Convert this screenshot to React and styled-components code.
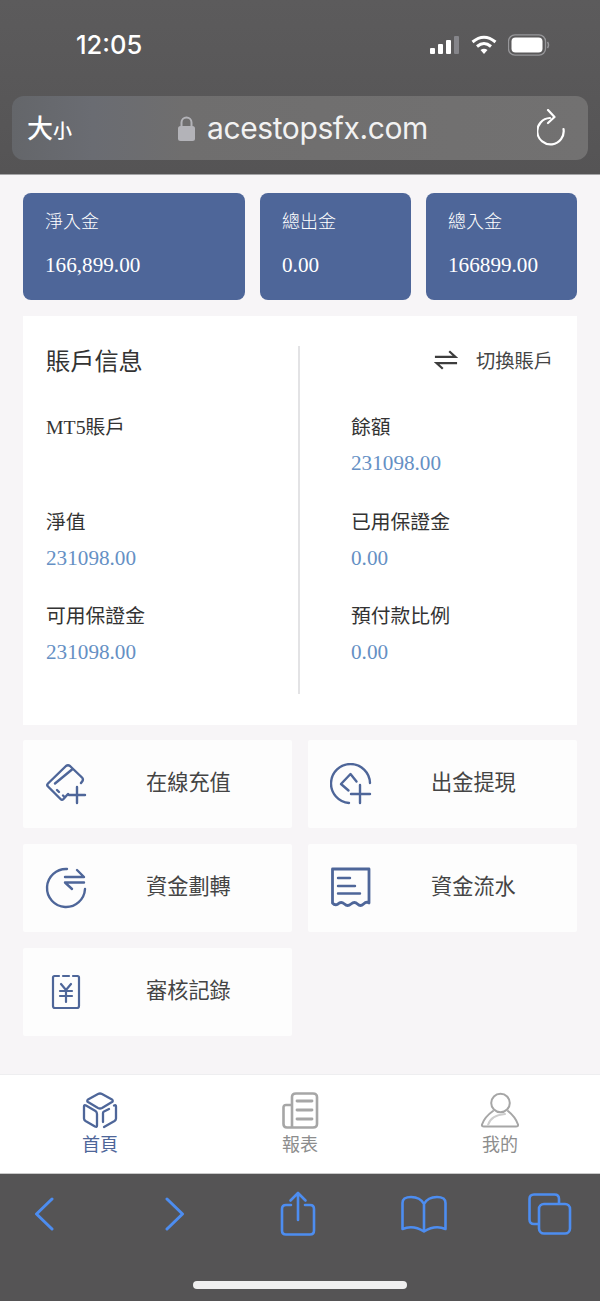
import React from 'react';
import styled, { createGlobalStyle } from 'styled-components';

const GlobalStyle = createGlobalStyle`
  html, body {
    margin: 0;
    padding: 0;
    background: #f7f5f7;
  }
  * {
    box-sizing: border-box;
  }
`;

const SANS = `"Noto Sans CJK TC", "Noto Sans", sans-serif`;
const SERIF = `"Liberation Serif", "Noto Sans CJK TC", serif`;
const BLUE = '#4e6699';
const VALUE = '#6590c4';
const SAFARI = '#4d8df0';
const GREY = '#a6a6a6';

const stats = [
  { label: '淨入金', value: '166,899.00', wide: true },
  { label: '總出金', value: '0.00' },
  { label: '總入金', value: '166899.00' },
];

const leftFields = [
  { label: 'MT5賬戶', value: '' },
  { label: '淨值', value: '231098.00' },
  { label: '可用保證金', value: '231098.00' },
];

const rightFields = [
  { label: '餘額', value: '231098.00' },
  { label: '已用保證金', value: '0.00' },
  { label: '預付款比例', value: '0.00' },
];

const CardPlus = () => (
  <svg width="42" height="42" viewBox="0 0 42 42" fill="none" stroke={BLUE} strokeWidth="2.4" strokeLinecap="round" strokeLinejoin="round">
    <path d="M23 31 L18.5 36 Q17 37.5 15.5 36 L3 23.5 Q1.5 22 3 20.5 L21 3 Q23 1.5 25 3 L37 14.5 Q38.5 16 37.5 18 L36 20" />
    <path d="M10 20.5 L27 6.5" />
    <path d="M12 27 L14 29 M18 32.5 L19 33.5" />
    <path d="M32 24 V40 M24 32 H40" />
  </svg>
);

const CirclePlus = () => (
  <svg width="42" height="42" viewBox="0 0 42 42" fill="none" stroke={BLUE} strokeWidth="2.4" strokeLinecap="round" strokeLinejoin="round">
    <path d="M40 20 A19.5 19.5 0 1 0 19 40" />
    <path d="M18.5 27.5 L11 21 L20.5 11 L26.5 18.5" />
    <path d="M30 22 V40 M21 31 H40" />
  </svg>
);

const CircleSwap = () => (
  <svg width="42" height="42" viewBox="0 0 42 42" fill="none" stroke={BLUE} strokeWidth="2.4" strokeLinecap="round" strokeLinejoin="round">
    <path d="M22 2 A19 19 0 1 0 40 22" />
    <path d="M20 10 H39 L32 3" />
    <path d="M39 15.5 H20 L27 22" />
  </svg>
);

const Receipt = () => (
  <svg width="42" height="42" viewBox="0 0 42 42" fill="none" stroke={BLUE} strokeWidth="2.8" strokeLinecap="round" strokeLinejoin="round">
    <path d="M2.5 2 H39 V36 Q36.5 34 33.5 37 Q30.5 40 27.5 37 Q24.5 34 21 37 Q17.5 40 14.5 37 Q11 34 8 37 Q5 39 2.5 36 Z" />
    <path d="M8 11 H20 M8 19 H25 M8 26.5 H30" strokeWidth="2.4" />
  </svg>
);

const YenNote = () => (
  <svg width="30" height="36" viewBox="0 0 30 36" fill="none" stroke={BLUE} strokeWidth="2.2" strokeLinecap="round" strokeLinejoin="round">
    <path d="M8 2 H3.5 Q2 2 2 3.5 V32 Q2 34 4 34 H26 Q28 34 28 32 V3.5 Q28 2 26.5 2 H22" />
    <path d="M12 2 H18" />
    <path d="M10 10 L15 16 L20 10 M9 17 H21 M9 22 H21 M15 16 V28" />
  </svg>
);

const actions = [
  { label: '在線充值', Icon: CardPlus },
  { label: '出金提現', Icon: CirclePlus },
  { label: '資金劃轉', Icon: CircleSwap },
  { label: '資金流水', Icon: Receipt },
  { label: '審核記錄', Icon: YenNote },
];

const tabs = [
  {
    label: '首頁',
    active: true,
    icon: (
      <svg width="40" height="40" viewBox="-2 0 40 40" fill="none" stroke={BLUE} strokeWidth="2.3" strokeLinecap="round" strokeLinejoin="round">
        <path d="M16 3 Q18 2 20 3 L30 8.5 Q31.5 10 30 11 L20 17 Q18 18 16 17 L6 11 Q4.5 10 6 8.5 Z" />
        <path d="M2 15.5 Q2 13.5 4 14.5 L13.5 20 Q15 21 15 23 V34.5 Q15 36.5 13 35.5 L3.5 30 Q2 29 2 27.5 Z" />
        <path d="M34 15.5 Q34 13.5 32 14.5 M34 15.5 V27.5 Q34 29 32.5 30 L22 36" />
        <path d="M21 31 V22 Q21 21 22 20.5 L27 18" />
      </svg>
    ),
  },
  {
    label: '報表',
    icon: (
      <svg width="40" height="40" viewBox="-2 0 40 40" fill="none" stroke={GREY} strokeWidth="2.6" strokeLinecap="round" strokeLinejoin="round">
        <path d="M10 14 H4 Q1.5 14 1.5 16.5 V33 Q1.5 36.5 5 36.5 H31 Q35 36.5 35 33 V6 Q35 2.5 31 2.5 H14 Q10 2.5 10 6 V36" />
        <path d="M15 10 H30 M15 19 H30 M15 28 H30" strokeWidth="2.8" />
      </svg>
    ),
  },
  {
    label: '我的',
    icon: (
      <svg width="40" height="40" viewBox="0 0 40 40" fill="none" stroke={GREY} strokeWidth="2" strokeLinecap="round" strokeLinejoin="round">
        <circle cx="20.5" cy="12" r="9.3" />
        <path d="M13 20 Q4.5 26 2 33.5 Q1.5 35.5 4 35.5 H36 Q38.5 35.5 38 33.5 Q35.5 26 28 20" />
        <path d="M8 34 Q11 24 25 23" stroke="#cdcdcd" />
      </svg>
    ),
  },
];

export default function App() {
  return (
    <>
      <GlobalStyle />
      <Page>
        <BrowserTop>
          <StatusBar>
            <Clock>12:05</Clock>
            <StatusIcons>
              <svg width="30" height="20" viewBox="0 0 30 20" fill="#fff">
                <rect x="0" y="13" width="5" height="6" rx="1" />
                <rect x="8" y="9" width="5" height="10" rx="1" />
                <rect x="16" y="5" width="5" height="14" rx="1" />
                <rect x="24" y="1" width="5" height="18" rx="1" fill="#85858a" />
              </svg>
              <svg width="26" height="20" viewBox="0 0 26 20" fill="none" stroke="#fff" strokeWidth="3">
                <path d="M1.5 7 Q13 -2.5 24.5 7" />
                <path d="M6 11.5 Q13 5.5 20 11.5" />
                <path d="M13 19 L9.5 15 Q13 12.5 16.5 15 Z" fill="#fff" stroke="none" />
              </svg>
              <svg width="42" height="22" viewBox="0 0 42 22" fill="none">
                <rect x="0.5" y="0.8" width="37" height="20.4" rx="6.5" stroke="#97979a" strokeWidth="1.3" />
                <rect x="3.5" y="3.5" width="31" height="15" rx="4" fill="#fff" />
                <path d="M39.5 8 Q41.5 11 39.5 14" stroke="#97979a" strokeWidth="1.5" />
              </svg>
            </StatusIcons>
          </StatusBar>
          <AddressBar>
            <TextSize>
              大<small>小</small>
            </TextSize>
            <AddressCenter>
              <svg width="17" height="25" viewBox="0 0 17 25">
                <path d="M3.5 11 V6.5 A5 5 0 0 1 13.5 6.5 V11" fill="none" stroke="#b3b3b8" strokeWidth="2" />
                <rect x="0" y="10" width="17" height="15" rx="2.5" fill="#b3b3b8" />
              </svg>
              <Domain>acestopsfx.com</Domain>
            </AddressCenter>
            <svg width="30" height="38" viewBox="0 0 30 38" fill="none" stroke="#fff" strokeWidth="2.2" strokeLinecap="round" strokeLinejoin="round">
              <path d="M13 9 A13.2 13.2 0 1 0 26.5 20" />
              <path d="M11 1 L17.5 8 L11 14" />
            </svg>
          </AddressBar>
        </BrowserTop>

        <Content>
          <StatRow>
            {stats.map((s) => (
              <StatCard key={s.label} $wide={s.wide}>
                <StatLabel>{s.label}</StatLabel>
                <StatValue>{s.value}</StatValue>
              </StatCard>
            ))}
          </StatRow>

          <AccountPanel>
            <AccountColumn>
              <PanelTitle>賬戶信息</PanelTitle>
              {leftFields.map((f) => (
                <Field key={f.label}>
                  <FieldLabel>{f.label}</FieldLabel>
                  <FieldValue>{f.value}</FieldValue>
                </Field>
              ))}
            </AccountColumn>
            <AccountColumn $right>
              <SwitchRow>
                <svg width="24" height="22" viewBox="0 0 26 22" fill="none" stroke="#3d3d3d" strokeWidth="2.4">
                  <path d="M1 7.5 H23 L16.5 1.5" />
                  <path d="M25 14.5 H3 L9.5 20.5" />
                </svg>
                <SwitchLabel>切換賬戶</SwitchLabel>
              </SwitchRow>
              {rightFields.map((f) => (
                <Field key={f.label}>
                  <FieldLabel>{f.label}</FieldLabel>
                  <FieldValue>{f.value}</FieldValue>
                </Field>
              ))}
            </AccountColumn>
          </AccountPanel>

          <ActionGrid>
            {actions.map(({ label, Icon }) => (
              <ActionButton key={label}>
                <ActionIcon>
                  <Icon />
                </ActionIcon>
                <ActionLabel>{label}</ActionLabel>
              </ActionButton>
            ))}
          </ActionGrid>
        </Content>

        <TabBar>
          {tabs.map((t) => (
            <Tab key={t.label} $active={t.active}>
              {t.icon}
              <span>{t.label}</span>
            </Tab>
          ))}
        </TabBar>

        <BrowserBottom>
          <ToolRow>
            <ToolSlot $left={0}>
              <svg width="20" height="34" viewBox="0 0 20 34" fill="none" stroke={SAFARI} strokeWidth="3" strokeLinecap="round" strokeLinejoin="round">
                <path d="M18 2 L2.5 17 L18 32" />
              </svg>
            </ToolSlot>
            <ToolSlot $left={111}>
              <svg width="20" height="34" viewBox="0 0 20 34" fill="none" stroke={SAFARI} strokeWidth="3" strokeLinecap="round" strokeLinejoin="round">
                <path d="M2 2 L17.5 17 L2 32" />
              </svg>
            </ToolSlot>
            <ToolSlot $left={95} $up={2}>
              <svg width="36" height="45" viewBox="0 0 36 45" fill="none" stroke={SAFARI} strokeWidth="2.6" strokeLinecap="round" strokeLinejoin="round">
                <path d="M11 14 H6 Q2 14 2 18 V39.5 Q2 43.5 6 43.5 H30 Q34 43.5 34 39.5 V18 Q34 14 30 14 H25" />
                <path d="M18 29 V2 M10.5 9.5 L18 2 L25.5 9.5" />
              </svg>
            </ToolSlot>
            <ToolSlot $left={85}>
              <svg width="46" height="38" viewBox="0 0 46 38" fill="none" stroke={SAFARI} strokeWidth="2.6" strokeLinecap="round" strokeLinejoin="round">
                <path d="M23 34 V9 C20 3.5 15 2 10 2 Q6 2 3.5 3.5 Q1.5 5 1.5 8 V34 Q12 29.5 23 36.5 Q34 29.5 44.5 34 V8 Q44.5 5 42.5 3.5 Q40 2 36 2 C31 2 26 3.5 23 9" />
              </svg>
            </ToolSlot>
            <ToolSlot $left={81}>
              <svg width="44" height="42" viewBox="0 0 44 42" fill="none" stroke={SAFARI} strokeWidth="2.6" strokeLinejoin="round">
                <path d="M11 31 H6 Q1.5 31 1.5 26.5 V6 Q1.5 1.5 6 1.5 H26.5 Q31 1.5 31 6 V11" />
                <rect x="11" y="11" width="31" height="29.5" rx="5" />
              </svg>
            </ToolSlot>
          </ToolRow>
          <HomeIndicator />
        </BrowserBottom>
      </Page>
    </>
  );
}

const Page = styled.div`
  width: 600px;
  height: 1301px;
  display: flex;
  flex-direction: column;
  background: #f7f5f7;
  overflow: hidden;
`;

const BrowserTop = styled.header`
  height: 175px;
  padding: 0 12px;
  background: linear-gradient(180deg, #5c5b5c 0%, #555455 100%);
  border-bottom: 1px solid #a5a5a7;
`;

const StatusBar = styled.div`
  height: 96px;
  display: flex;
  align-items: flex-start;
  justify-content: space-between;
  padding: 30px 38px 0 64px;
`;

const Clock = styled.div`
  font-family: "Inter", sans-serif;
  font-size: 25.5px;
  line-height: 30px;
  font-weight: 500;
  color: #fff;
`;

const StatusIcons = styled.div`
  display: flex;
  align-items: center;
  gap: 11px;
  height: 30px;
`;

const AddressBar = styled.div`
  height: 64px;
  padding: 0 21px 0 15px;
  display: flex;
  align-items: center;
  justify-content: space-between;
  border-radius: 12px;
  background: linear-gradient(90deg, #64666a 0%, #6a6c72 14%, #6f6e6e 30%, #727171 100%);
`;

const TextSize = styled.div`
  width: 90px;
  font-family: ${SANS};
  font-size: 26px;
  line-height: 30px;
  font-weight: 500;
  color: #fff;

  small {
    font-size: 19px;
  }
`;

const AddressCenter = styled.div`
  display: flex;
  align-items: center;
  gap: 12px;
  color: #fff;
  margin-right: 48px;
`;

const Domain = styled.span`
  font-family: "Inter", "Liberation Sans", sans-serif;
  font-size: 30px;
  line-height: 36px;
  color: #f2f2f2;
  letter-spacing: -0.4px;
`;

const Content = styled.main`
  flex: 1;
  padding: 18px 23px 0;
`;

const StatRow = styled.section`
  display: grid;
  grid-template-columns: 222px 151px 151px;
  column-gap: 15px;
`;

const StatCard = styled.div`
  height: 107px;
  padding: 14px 22px;
  border-radius: 8px;
  background: ${BLUE};
  color: #fff;
`;

const StatLabel = styled.div`
  font-family: ${SANS};
  font-size: 18px;
  line-height: 26px;
  font-weight: 300;
`;

const StatValue = styled.div`
  margin-top: 19px;
  font-family: ${SERIF};
  font-size: 21.2px;
  line-height: 26px;
`;

const AccountPanel = styled.section`
  height: 409px;
  margin-top: 16px;
  padding: 30px 0 31px;
  display: grid;
  grid-template-columns: 275px 279px;
  grid-template-rows: 348px;
  background: #fff;
`;

const AccountColumn = styled.div`
  padding: 0 24px 0 ${(props) => (props.$right ? '51px' : '23px')};
  ${(props) => props.$right && 'border-left: 2px solid #e3e3e5;'}
`;

const PanelTitle = styled.h2`
  margin: 0 0 40px;
  font-family: ${SANS};
  font-size: 24.2px;
  line-height: 28px;
  font-weight: 400;
  color: #333;
`;

const SwitchRow = styled.div`
  height: 28px;
  margin-bottom: 40px;
  display: flex;
  align-items: center;
  justify-content: flex-end;
  gap: 18px;
`;

const SwitchLabel = styled.span`
  font-family: ${SANS};
  font-size: 19.3px;
  line-height: 28px;
  color: #444;
  font-weight: 400;
`;

const Field = styled.div`
  height: 94.5px;
`;

const FieldLabel = styled.div`
  font-family: ${SERIF};
  font-size: 19.8px;
  line-height: 26px;
  color: #333;
`;

const FieldValue = styled.div`
  margin-top: 10px;
  font-family: ${SERIF};
  font-size: 21.2px;
  line-height: 26px;
  color: ${VALUE};
`;

const ActionGrid = styled.section`
  margin-top: 15px;
  display: grid;
  grid-template-columns: 269px 269px;
  grid-auto-rows: 88px;
  gap: 16px;
`;

const ActionButton = styled.div`
  display: flex;
  align-items: center;
  padding-left: 22px;
  background: #fdfdfd;
  border-radius: 2px;
`;

const ActionIcon = styled.div`
  width: 42px;
  display: flex;
  justify-content: center;
`;

const ActionLabel = styled.span`
  margin: 0 0 6px 59px;
  font-family: ${SANS};
  font-size: 21.2px;
  line-height: 30px;
  color: #444;
`;

const TabBar = styled.nav`
  height: 100px;
  display: grid;
  grid-template-columns: repeat(3, 200px);
  padding-top: 16px;
  background: #fff;
  border-top: 1px solid #eeeef0;
  border-bottom: 1px solid #c9c9c9;
`;

const Tab = styled.div`
  display: flex;
  flex-direction: column;
  align-items: center;
  color: ${(props) => (props.$active ? BLUE : '#8d8d8d')};

  span {
    font-family: ${SANS};
    font-size: 18px;
    line-height: 24px;
  }
`;

const BrowserBottom = styled.footer`
  height: 127px;
  position: relative;
  background: #555455;
`;

const ToolRow = styled.div`
  height: 80px;
  display: flex;
  align-items: center;
  padding-left: 34px;
`;

const ToolSlot = styled.div`
  display: flex;
  margin-left: ${(props) => props.$left}px;
  margin-bottom: ${(props) => props.$up || 0}px;
`;

const HomeIndicator = styled.div`
  position: absolute;
  left: 193px;
  bottom: 12px;
  width: 214px;
  height: 8px;
  border-radius: 4px;
  background: #efefef;
`;
